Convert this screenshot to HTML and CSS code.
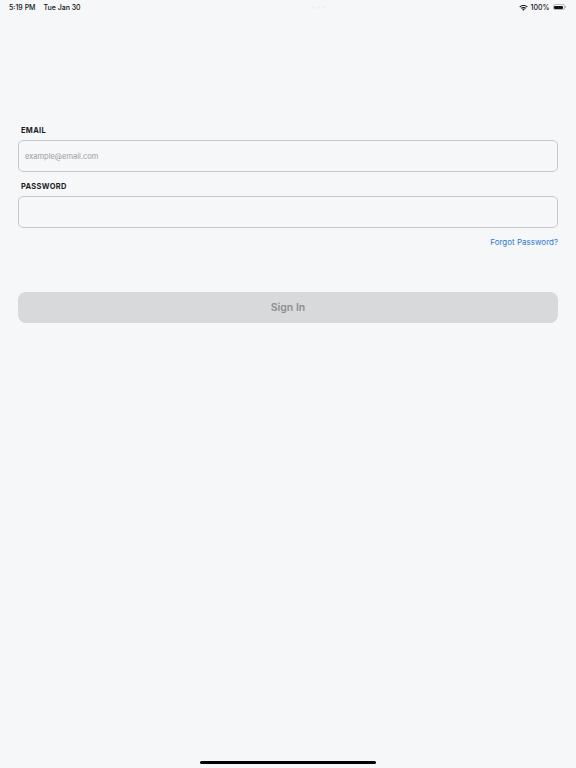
FILE: index.html
```html
<!DOCTYPE html>
<html lang="en">
<head>
    <meta charset="UTF-8">
    <meta name="viewport" content="width=device-width, initial-scale=1.0">
    <title>Sign In</title>
    <link rel="stylesheet" href="styles.css">
</head>
<body>
    <div class="screen">
        <div class="status-bar">
            <div class="status-left">
                <span>5:19 PM</span>
                <span>Tue Jan 30</span>
            </div>
            <div class="status-dots">
                <span></span><span></span><span></span>
            </div>
            <div class="status-right">
                <svg class="wifi" width="9" height="7" viewBox="0 0 18 13">
                    <path d="M9 1.5c3.2 0 6.1 1.2 8.3 3.2l-1.5 1.6C14 4.7 11.6 3.7 9 3.7S4 4.7 2.2 6.3L0.7 4.7C2.9 2.7 5.8 1.5 9 1.5z" fill="#111"/>
                    <path d="M9 5.6c2.1 0 4 .8 5.4 2l-1.5 1.6c-1-.9-2.4-1.4-3.9-1.4s-2.9.5-3.9 1.4L3.6 7.6c1.4-1.2 3.3-2 5.4-2z" fill="#111"/>
                    <path d="M9 9.6c.9 0 1.7.3 2.4.9L9 13l-2.4-2.5c.7-.6 1.5-.9 2.4-.9z" fill="#111"/>
                </svg>
                <span>100%</span>
                <div class="battery">
                    <div class="battery-body"><div class="battery-level"></div></div>
                    <div class="battery-cap"></div>
                </div>
            </div>
        </div>

        <form class="login-form">
            <label for="email">EMAIL</label>
            <input type="email" id="email" placeholder="example@email.com">

            <label for="password" class="second">PASSWORD</label>
            <input type="password" id="password">

            <div class="forgot-row">
                <a href="#" class="forgot">Forgot Password?</a>
            </div>

            <button type="submit" class="sign-in" disabled>Sign In</button>
        </form>

        <div class="home-indicator"></div>
    </div>
</body>
</html>
```

FILE: styles.css
```css
* {
    box-sizing: border-box;
}
body {
    margin: 0;
    font-family: Inter, "Liberation Sans", Arial, sans-serif;
    background-color: #f6f7f9;
    color: #111;
}
.screen {
    width: 576px;
    height: 768px;
    display: flex;
    flex-direction: column;
}
.status-bar {
    height: 14px;
    display: flex;
    align-items: center;
    justify-content: space-between;
    padding: 0 10px 0 9px;
    font-size: 7px;
    font-weight: 500;
}
.status-left span + span {
    margin-left: 6px;
}
.status-dots {
    display: flex;
    gap: 2px;
    margin-left: 38px;
}
.status-dots span {
    width: 3px;
    height: 3px;
    border-radius: 50%;
    background-color: #eff0f2;
}
.status-right {
    display: flex;
    align-items: center;
    gap: 2px;
}
.wifi {
    margin-right: 1px;
}
.battery {
    display: flex;
    align-items: center;
    margin-left: 1px;
}
.battery-body {
    width: 12px;
    height: 6px;
    border: 1px solid #bbb;
    border-radius: 2px;
    padding: 0.5px;
}
.battery-level {
    width: 100%;
    height: 100%;
    background-color: #111;
    border-radius: 1px;
}
.battery-cap {
    width: 1px;
    height: 2px;
    background-color: #bbb;
    margin-left: 0.5px;
}
.login-form {
    display: flex;
    flex-direction: column;
    padding: 112px 18px 0 18px;
}
label {
    display: block;
    font-size: 7.5px;
    font-weight: 700;
    letter-spacing: 0.3px;
    line-height: 10px;
    padding-left: 3px;
    color: #1c1c1e;
    margin-bottom: 4px;
}
label.second {
    margin-top: 10px;
}
input {
    width: 100%;
    height: 32px;
    border: 1px solid #c7c7cc;
    border-radius: 5px;
    background-color: #f6f7f9;
    padding: 0 6px;
    font-family: inherit;
    font-size: 7.5px;
    color: #111;
    outline: none;
}
input::placeholder {
    color: #9a9aa0;
}
.forgot-row {
    display: flex;
    justify-content: flex-end;
    margin-top: 9px;
    line-height: 11px;
}
.forgot {
    font-size: 8px;
    color: #2f79c9;
    text-decoration: none;
}
.sign-in {
    margin-top: 44px;
    width: 100%;
    height: 31px;
    border: none;
    border-radius: 8px;
    background-color: #d8d9db;
    color: #8e8e93;
    font-family: inherit;
    font-size: 10.5px;
    font-weight: 600;
}
.home-indicator {
    margin: auto auto 4px auto;
    width: 176px;
    height: 3px;
    border-radius: 2px;
    background-color: #000;
}
```
